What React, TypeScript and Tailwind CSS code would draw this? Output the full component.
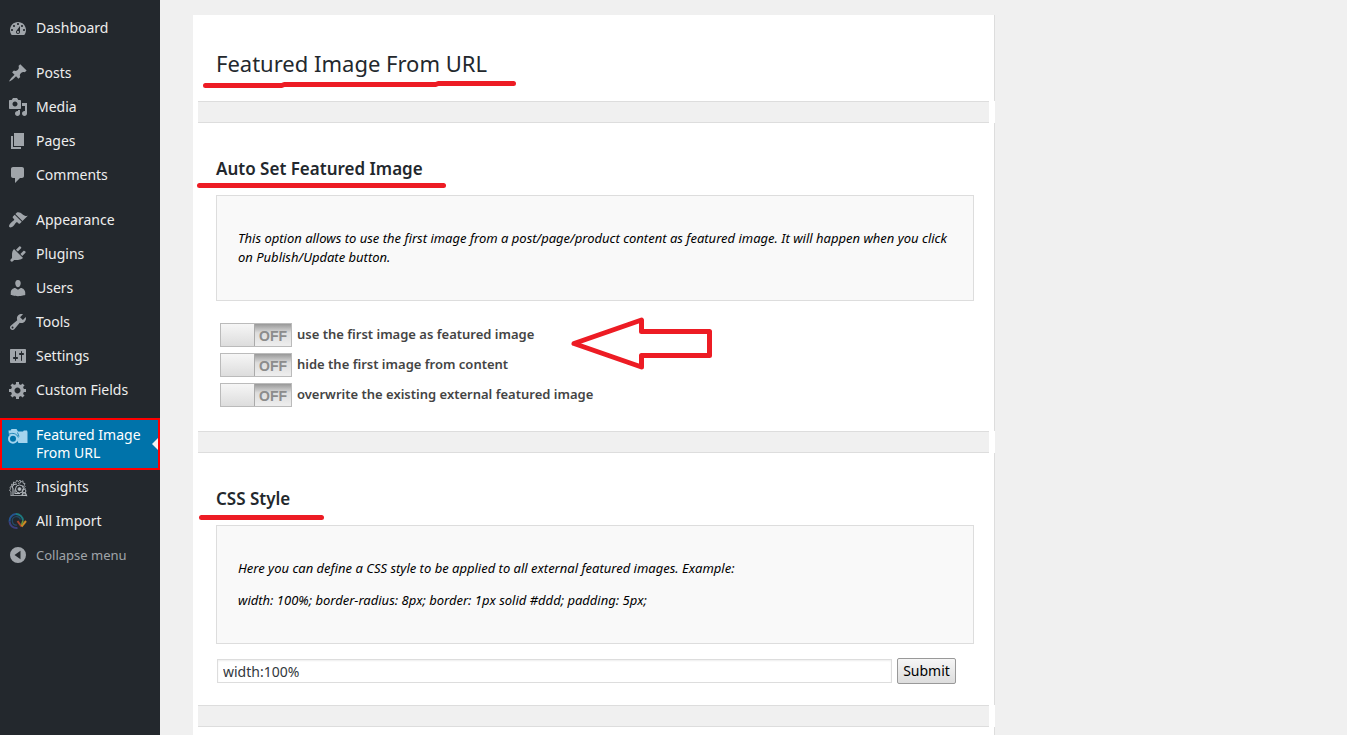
import React, { useState } from 'react';
import clsx from 'clsx';

type MenuEntry = {
  label: string;
  icon: React.ReactNode;
  active?: boolean;
};

const Dashicon = ({ d }: { d: string }) => (
  <svg viewBox="0 0 20 20" className="h-5 w-5" fill="currentColor" fillRule="evenodd" aria-hidden="true">
    <path d={d} />
  </svg>
);

const CameraIcon = () => (
  <svg viewBox="0 0 20 20" className="h-5 w-5" aria-hidden="true">
    <path fill="#a3d4ee" d="M.5 5.500h2L3.500 4h5l1.500 2.500h5l.8-1h3.200l.5 1.500v11H10.500L6 9.500l-5 .5z" />
    <circle cx="5" cy="13.800" r="4" fill="#0073aa" stroke="#a3d4ee" strokeWidth="2" />
    <path d="M1 9.200c3-1.600 8-1 9.300 3.300" fill="none" stroke="#0073aa" strokeWidth=".8" />
    <path d="M9.500 7.500l1.500 4" fill="none" stroke="#0073aa" strokeWidth=".8" />
  </svg>
);

const InsightsIcon = () => (
  <svg viewBox="0 0 20 20" className="h-5 w-5" fill="none" stroke="#b4b9be" strokeWidth=".8" aria-hidden="true">
    <path d="M2.500 18.500h15M3 18.500v-4l-1.500-1 1-1.500-.5-2 1.800-.8-.3-2 2 .2V5l2 .8L9 3.200l1.200 1.600L12 3l.8 2 2.200-1.200v2.400l2 .3-.8 2 1.300 1.500" />
    <path d="M5 18V11.500L4 10l2-2.500 3-.5M7 17v-4.500" strokeWidth="1.100" />
    <circle cx="11.500" cy="12" r="4" strokeWidth="1" />
    <circle cx="11.500" cy="12" r="1.500" fill="#b4b9be" />
    <path d="M10 6.500l3-1M14.500 8.500l3 3.500" />
    <circle cx="16" cy="14" r="1.900" strokeWidth="1" />
    <path d="M14 18l1-2h2.500l1 2.500zM7 16.500h5" strokeWidth="1.200" />
  </svg>
);

const ImportIcon = () => (
  <svg viewBox="0 0 20 20" className="h-5 w-5" fill="none" aria-hidden="true">
    <path d="M9.500 17A7 7 0 0 1 1.500 10.500" stroke="#3d3f7c" strokeWidth="2" />
    <path d="M1.500 10.500A7 7 0 0 1 8 3" stroke="#245591" strokeWidth="2" />
    <path d="M8 3a7 7 0 0 1 7 6.500" stroke="#1d7a80" strokeWidth="2" />
    <path d="M9 14a4.200 4.200 0 1 1 3.500-5.500" stroke="#234a66" strokeWidth="1.200" />
    <path d="M9.500 10l4 5.500" stroke="#a8432f" strokeWidth="2" />
    <path d="M13.500 15.500l4.500-5.500" stroke="#cf8a25" strokeWidth="2" />
    <path d="M13.500 14l1.500-4.500" stroke="#6f9a3a" strokeWidth="1.500" />
  </svg>
);

const menuGroups: MenuEntry[][] = [
  [
    {
      label: 'Dashboard',
      icon: <Dashicon d="M3.760 17h12.480c1.100-1.370 1.760-3.110 1.760-5 0-4.420-3.580-8-8-8s-8 3.580-8 8c0 1.890.66 3.630 1.760 5zM10 5c.55 0 1 .45 1 1s-.45 1-1 1-1-.45-1-1 .45-1 1-1zM6 7c.55 0 1 .45 1 1s-.45 1-1 1-1-.45-1-1 .45-1 1-1zm8 0c.55 0 1 .45 1 1s-.45 1-1 1-1-.45-1-1 .45-1 1-1zm-5.370 5.550L12 8v6c0 1.100-.9 2-2 2s-2-.9-2-2c0-.57.24-1.080.63-1.450zM4 11c.55 0 1 .45 1 1s-.45 1-1 1-1-.45-1-1 .45-1 1-1zm12 0c.55 0 1 .45 1 1s-.45 1-1 1-1-.45-1-1 .45-1 1-1zm-5 3c0-.55-.45-1-1-1s-1 .45-1 1 .45 1 1 1 1-.45 1-1z" />,
    },
  ],
  [
    {
      label: 'Posts',
      icon: <Dashicon d="M10.440 3.020l1.820-1.820 6.360 6.350-1.830 1.820c-1.050-.68-2.480-.57-3.410.36l-.75.75c-.92.93-1.040 2.350-.35 3.410l-1.830 1.820-2.410-2.410-2.800 2.790c-.42.42-3.380 2.710-3.800 2.290s1.860-3.390 2.280-3.810l2.790-2.790L4.100 9.360l1.830-1.820c1.050.69 2.480.57 3.400-.36l.75-.75c.93-.92 1.050-2.350.36-3.410z" />,
    },
    {
      label: 'Media',
      icon: <Dashicon d="M13 11V4c0-.55-.45-1-1-1h-1.670L9 1H5L3.670 3H2c-.55 0-1 .45-1 1v7c0 .55.45 1 1 1h10c.55 0 1-.45 1-1zM7 4.500c1.380 0 2.500 1.120 2.500 2.500S8.380 9.500 7 9.500 4.500 8.380 4.500 7 5.620 4.500 7 4.500zM14 6h5v10.500c0 1.380-1.120 2.500-2.500 2.500S14 17.880 14 16.500s1.120-2.500 2.500-2.500c.17 0 .34.02.5.05V9h-3V6zm-4 8.050V13h2v3.500c0 1.380-1.120 2.500-2.500 2.500S7 17.880 7 16.500 8.120 14 9.500 14c.17 0 .34.02.5.05z" />,
    },
    { label: 'Pages', icon: <Dashicon d="M6 15V2h10v13H6zm-1 1h8v2H3V5h2v11z" /> },
    {
      label: 'Comments',
      icon: <Dashicon d="M5 2h9c1.100 0 2 .9 2 2v7c0 1.100-.9 2-2 2h-2l-5 5v-5H5c-1.100 0-2-.9-2-2V4c0-1.100.9-2 2-2z" />,
    },
  ],
  [
    {
      label: 'Appearance',
      icon: <Dashicon d="M14.480 11.060L7.410 3.990l1.500-1.500c.5-.56 2.300-.47 3.510.32 1.210.8 1.430 1.280 2.910 2.100 1.180.64 2.450 1.260 4.450.85zm-.71.71L6.700 4.700 4.930 6.470c-.39.39-.39 1.020 0 1.410l1.060 1.060c.39.39.39 1.030 0 1.420-.6.6-1.430 1.110-2.210 1.690-.35.26-.7.53-1.010.84C1.430 14.230.4 16.080 1.400 17.070c.99 1 2.840-.03 4.180-1.360.31-.31.58-.66.85-1.020.57-.78 1.080-1.610 1.690-2.210.39-.39 1.020-.39 1.410 0l1.060 1.060c.39.39 1.020.39 1.410 0z" />,
    },
    {
      label: 'Plugins',
      icon: <Dashicon d="M13.110 4.360L9.870 7.600 8 5.730l3.240-3.240c.35-.34 1.050-.2 1.560.32.52.51.66 1.210.31 1.550zm-8 1.770l.91-1.120 9.010 9.010-1.190.84c-.71.71-2.630 1.160-3.820 1.160H6.140L4.900 17.260c-.59.59-1.540.59-2.120 0-.59-.58-.59-1.530 0-2.120l1.240-1.240v-3.880c0-1.130.4-3.190 1.090-3.890zm7.260 3.970l3.240-3.240c.34-.35 1.040-.21 1.550.31.52.51.66 1.210.31 1.550l-3.240 3.250z" />,
    },
    {
      label: 'Users',
      icon: <Dashicon d="M10 9.250c-2.270 0-2.730-3.440-2.730-3.440C7 4.020 7.820 2 9.970 2c2.160 0 2.980 2.020 2.710 3.810 0 0-.41 3.440-2.680 3.440zm0 2.570L12.720 10c2.390 0 4.520 2.330 4.520 4.530v2.490s-3.650 1.130-7.240 1.130c-3.650 0-7.240-1.130-7.240-1.130v-2.490c0-2.250 1.940-4.480 4.470-4.480z" />,
    },
    {
      label: 'Tools',
      icon: <Dashicon d="M16.680 9.770c-1.340 1.340-3.300 1.670-4.950.99l-5.410 6.520c-.99.99-2.590.99-3.580 0s-.99-2.590 0-3.570l6.520-5.420c-.68-1.650-.35-3.610.99-4.950 1.280-1.280 3.120-1.620 4.720-1.060l-2.890 2.890 2.820 2.820 2.860-2.870c.53 1.580.18 3.390-1.080 4.650zM3.810 16.210c.4.39 1.040.39 1.430 0 .4-.4.4-1.040 0-1.430-.39-.4-1.030-.4-1.430 0-.39.39-.39 1.030 0 1.430z" />,
    },
    {
      label: 'Settings',
      icon: <Dashicon d="M18 16V4c0-.55-.45-1-1-1H3c-.55 0-1 .45-1 1v12c0 .55.45 1 1 1h14c.55 0 1-.45 1-1zM8 11h1c.55 0 1 .45 1 1s-.45 1-1 1H8v1.500c0 .28-.22.5-.5.5s-.5-.22-.5-.5V13H6c-.55 0-1-.45-1-1s.45-1 1-1h1V5.500c0-.28.22-.5.5-.5s.5.22.5.5V11zm5-2h-1c-.55 0-1-.45-1-1s.45-1 1-1h1V5.500c0-.28.22-.5.5-.5s.5.22.5.5V7h1c.55 0 1 .45 1 1s-.45 1-1 1h-1v5.500c0 .28-.22.5-.5.5s-.5-.22-.5-.5V9z" />,
    },
    {
      label: 'Custom Fields',
      icon: <Dashicon d="M18 12h-2.180c-.17.7-.44 1.350-.81 1.930l1.540 1.540-2.100 2.100-1.540-1.540c-.58.36-1.230.63-1.910.79V19H8v-2.180c-.68-.16-1.330-.43-1.910-.79l-1.540 1.540-2.120-2.120 1.540-1.540c-.36-.58-.63-1.230-.79-1.910H1V9.030h2.170c.16-.7.44-1.350.8-1.940L2.430 5.550l2.100-2.100 1.540 1.540c.58-.37 1.240-.64 1.930-.81V2h3v2.180c.68.16 1.330.43 1.910.79l1.540-1.540 2.120 2.120-1.540 1.540c.36.59.64 1.240.8 1.940H18V12zm-8.500 1.500c1.660 0 3-1.340 3-3s-1.340-3-3-3-3 1.340-3 3 1.340 3 3 3z" />,
    },
  ],
  [
    { label: 'Featured Image From URL', icon: <CameraIcon />, active: true },
    { label: 'Insights', icon: <InsightsIcon /> },
    { label: 'All Import', icon: <ImportIcon /> },
  ],
];

const MenuItem = ({ label, icon, active }: MenuEntry) => (
  <li>
    <a
      href="#"
      className={clsx(
        'relative flex py-2 text-sm leading-[18px]',
        active ? 'bg-[#0073aa] text-white outline-2 -outline-offset-2 outline-[#ff0000]' : 'text-[#eeeeee] hover:text-[#00b9eb]',
      )}
    >
      <span className="flex h-[18px] w-9 shrink-0 items-center justify-center text-[#a0a5aa]">{icon}</span>
      <span className="pr-4">{label}</span>
      {active && (
        <svg viewBox="0 0 6 12" className="absolute top-5 right-0.5 h-3 w-1.5" aria-hidden="true">
          <path d="M6 0v12L0 6z" fill="#f1f1f1" />
        </svg>
      )}
    </a>
  </li>
);

const Sidebar = () => (
  <nav className="w-40 shrink-0 bg-[#23282d] pt-[11px]">
    <div className="flex flex-col gap-[11px]">
      {menuGroups.map((group, i) => (
        <ul key={i}>
          {group.map((entry) => (
            <MenuItem key={entry.label} {...entry} />
          ))}
        </ul>
      ))}
    </div>
    <button type="button" className="flex w-full items-center py-2 text-left text-[13px] leading-[18px] text-[#a0a5aa]">
      <span className="flex h-[18px] w-9 shrink-0 items-center justify-center">
        <Dashicon d="M10 2a8 8 0 1 0 0 16 8 8 0 0 0 0-16zM12.500 5.800v8.400L6.500 10z" />
      </span>
      Collapse menu
    </button>
  </nav>
);

const Toggle = ({ label }: { label: string }) => {
  const [on, setOn] = useState(false);

  return (
    <label className="flex h-6 w-fit items-center gap-[5px] text-[13px] font-semibold text-[#444444]">
      <input type="checkbox" className="peer sr-only" checked={on} onChange={(e) => setOn(e.target.checked)} />
      <span
        className={clsx(
          'flex h-6 w-[72px] border border-[#bbbbbb] bg-linear-to-b from-[#999999] via-[#dddddd] via-40% to-[#eeeeee] peer-focus-visible:outline-2',
          on && 'flex-row-reverse',
        )}
      >
        <span className="w-[34px] border-r border-[#aaaaaa] bg-linear-to-b from-[#f6f6f6] to-[#dddddd]" />
        <span className="flex-1 text-center font-['Liberation_Sans',sans-serif] text-sm leading-6 font-bold text-[#8c8c8c]">
          {on ? 'ON' : 'OFF'}
        </span>
      </span>
      {label}
    </label>
  );
};

const Divider = () => <div className="mr-1.5 ml-[5px] h-[22px] border-y border-[#dddddd] bg-[#f0f0f0]" />;

const Section = ({ children, className }: { children?: React.ReactNode; className?: string }) => (
  <section className={clsx('border-r border-[#dddddd] pr-5 pl-[23px]', className)}>{children}</section>
);

const Note = ({ children }: { children: React.ReactNode }) => (
  <div className="flex flex-col gap-[13px] border border-[#dddddd] bg-[#f9f9f9] px-[21px] py-[33px] text-[13px] leading-[19px] text-black italic">
    {children}
  </div>
);

const Underline = ({ d, className }: { d: string; className: string }) => (
  <svg className={clsx('pointer-events-none absolute overflow-visible', className)} fill="none" stroke="#ed1c24" strokeWidth="5" strokeLinecap="round" aria-hidden="true">
    <path d={d} />
  </svg>
);

const App = () => {
  const [style, setStyle] = useState('width:100%');

  return (
    <div className="flex min-h-screen bg-[#f0f0f0] font-['Noto_Sans',sans-serif]">
      <Sidebar />

      <main className="flex flex-1 flex-col pt-[15px] pl-[33px]">
        <div className="flex w-full max-w-[802px] flex-1 flex-col bg-white">
          <Section className="pt-[33px] pb-[23px]">
            <h1 className="relative w-fit text-[22px] leading-[30px] text-[#23282d]">
              Featured Image From URL
              <Underline className="top-9 -left-2.5 h-1 w-[310px]" d="M-.5 1.500h76l3-1h151l3-1h75" />
            </h1>
          </Section>
          <Divider />

          <Section className="pt-[34px] pb-6">
            <h2 className="relative mb-[14px] w-fit text-[17px] leading-6 font-semibold text-[#23282d]">
              Auto Set Featured Image
              <Underline className="top-7 -left-[17px] h-1 w-[246px]" d="M.5.5h244" />
            </h2>
            <Note>
              <p>
                This option allows to use the first image from a post/page/product content as featured image. It will
                happen when you click on Publish/Update button.
              </p>
            </Note>
            <div className="relative mt-[22px] flex flex-col gap-1.5 pl-1">
              <Toggle label="use the first image as featured image" />
              <Toggle label="hide the first image from content" />
              <Toggle label="overwrite the existing external featured image" />
              <svg viewBox="0 0 142 54" className="pointer-events-none absolute -top-[7px] left-[354px] h-[54px] w-[142px]" aria-hidden="true">
                <path d="M4 27.500L71.500 4v11.500h68v24h-68V51z" fill="none" stroke="#ed1c24" strokeWidth="5" strokeLinejoin="round" />
              </svg>
            </div>
          </Section>
          <Divider />

          <Section className="pt-[34px] pb-[21px]">
            <h2 className="relative mb-[14px] w-fit text-[17px] leading-6 font-semibold text-[#23282d]">
              CSS Style
              <Underline className="top-7 -left-[17px] h-1 w-[124px]" d="M2.500 2.500h120" />
            </h2>
            <Note>
              <p>Here you can define a CSS style to be applied to all external featured images. Example:</p>
              <p>width: 100%; border-radius: 8px; border: 1px solid #ddd; padding: 5px;</p>
            </Note>
            <form className="mt-[14px] flex items-center gap-[5px] pr-[18px] pl-px" onSubmit={(e) => e.preventDefault()}>
              <input
                type="text"
                aria-label="CSS Style"
                value={style}
                onChange={(e) => setStyle(e.target.value)}
                className="h-6 min-w-0 flex-1 border border-[#dddddd] bg-white px-[5px] text-sm text-[#32373c] shadow-[inset_0_1px_2px_rgba(0,0,0,0.07)]"
              />
              <button
                type="submit"
                className="h-[26px] w-[59px] rounded-[2px] border border-[#999999] bg-linear-to-b from-[#f6f6f6] to-[#dddddd] text-sm text-black"
              >
                Submit
              </button>
            </form>
          </Section>
          <Divider />

          <Section className="min-h-2 flex-1" />
        </div>
      </main>
    </div>
  );
};

export default App;
